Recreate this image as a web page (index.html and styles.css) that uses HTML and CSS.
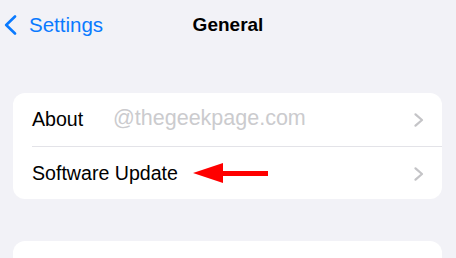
FILE: index.html
```html
<!DOCTYPE html>
<html lang="en">
<head>
<meta charset="utf-8">
<title>General</title>
<link rel="stylesheet" href="styles.css">
</head>
<body>
<header class="nav">
  <a class="back" href="#">
    <svg class="back-icon" width="13" height="20" viewBox="0 0 13 20" aria-hidden="true"><path d="M11 1.5 L2.2 10 L11 18.5" fill="none" stroke="#0a7aff" stroke-width="2.6" stroke-linecap="round" stroke-linejoin="round"/></svg>
    <span class="back-label">Settings</span>
  </a>
  <h1 class="title">General</h1>
  <span class="nav-spacer"></span>
</header>
<main class="content">
  <section class="group">
    <div class="row row-divided">
      <span class="row-label">About</span>
      <svg class="chev" width="10" height="14" viewBox="0 0 10 14" aria-hidden="true"><path d="M1.5 1.3 L8 7 L1.5 12.7" fill="none" stroke="#c4c4c7" stroke-width="2.2" stroke-linecap="round" stroke-linejoin="round"/></svg>
    </div>
    <div class="row">
      <span class="row-label">Software Update</span>
      <svg class="chev" width="10" height="14" viewBox="0 0 10 14" aria-hidden="true"><path d="M1.5 1.3 L8 7 L1.5 12.7" fill="none" stroke="#c4c4c7" stroke-width="2.2" stroke-linecap="round" stroke-linejoin="round"/></svg>
    </div>
    <span class="watermark">@thegeekpage.com</span>
    <svg class="arrow" width="76" height="21" viewBox="0 0 76 21" aria-hidden="true"><polygon points="0,10 30,0 30,20" fill="#ff0000"/><rect x="29" y="8" width="46" height="5" fill="#ff0000"/></svg>
  </section>
  <section class="group group-next"></section>
</main>
</body>
</html>
```
FILE: styles.css
```css
* { box-sizing: border-box; }
html, body { margin: 0; padding: 0; }
body {
  background: #f2f2f7;
  font-family: "Liberation Sans", Arial, sans-serif;
  color: #000;
  overflow: hidden;
  height: 258px;
}
.nav {
  height: 48px;
  display: grid;
  grid-template-columns: 1fr auto 1fr;
  align-items: center;
}
.back {
  display: flex;
  align-items: center;
  gap: 12px;
  padding-left: 4px;
  color: #0a7aff;
  text-decoration: none;
  font-size: 20.5px;
  padding-top: 1px;
}
.back-icon { display: block; }
.title {
  margin: 0;
  font-size: 19px;
  font-weight: 700;
  padding-top: 2px;
}
.content {
  padding: 45px 14px 0 13px;
}
.group {
  position: relative;
  background: #fff;
  border-radius: 12px;
}
.row {
  height: 52px;
  margin-left: 19px;
  padding-right: 18px;
  display: flex;
  align-items: center;
  justify-content: space-between;
  font-size: 19.6px;
}
.row-divided {
  height: 54px;
  border-bottom: 1px solid #e3e3e8;
}
.chev { display: block; margin-top: 1px; }
.watermark {
  position: absolute;
  left: 100px;
  top: 15px;
  font-size: 21.5px;
  line-height: 1;
  color: #cbcbce;
  pointer-events: none;
}
.arrow {
  position: absolute;
  left: 180px;
  top: 70px;
}
.group-next {
  margin-top: 42px;
  height: 100px;
}
```
